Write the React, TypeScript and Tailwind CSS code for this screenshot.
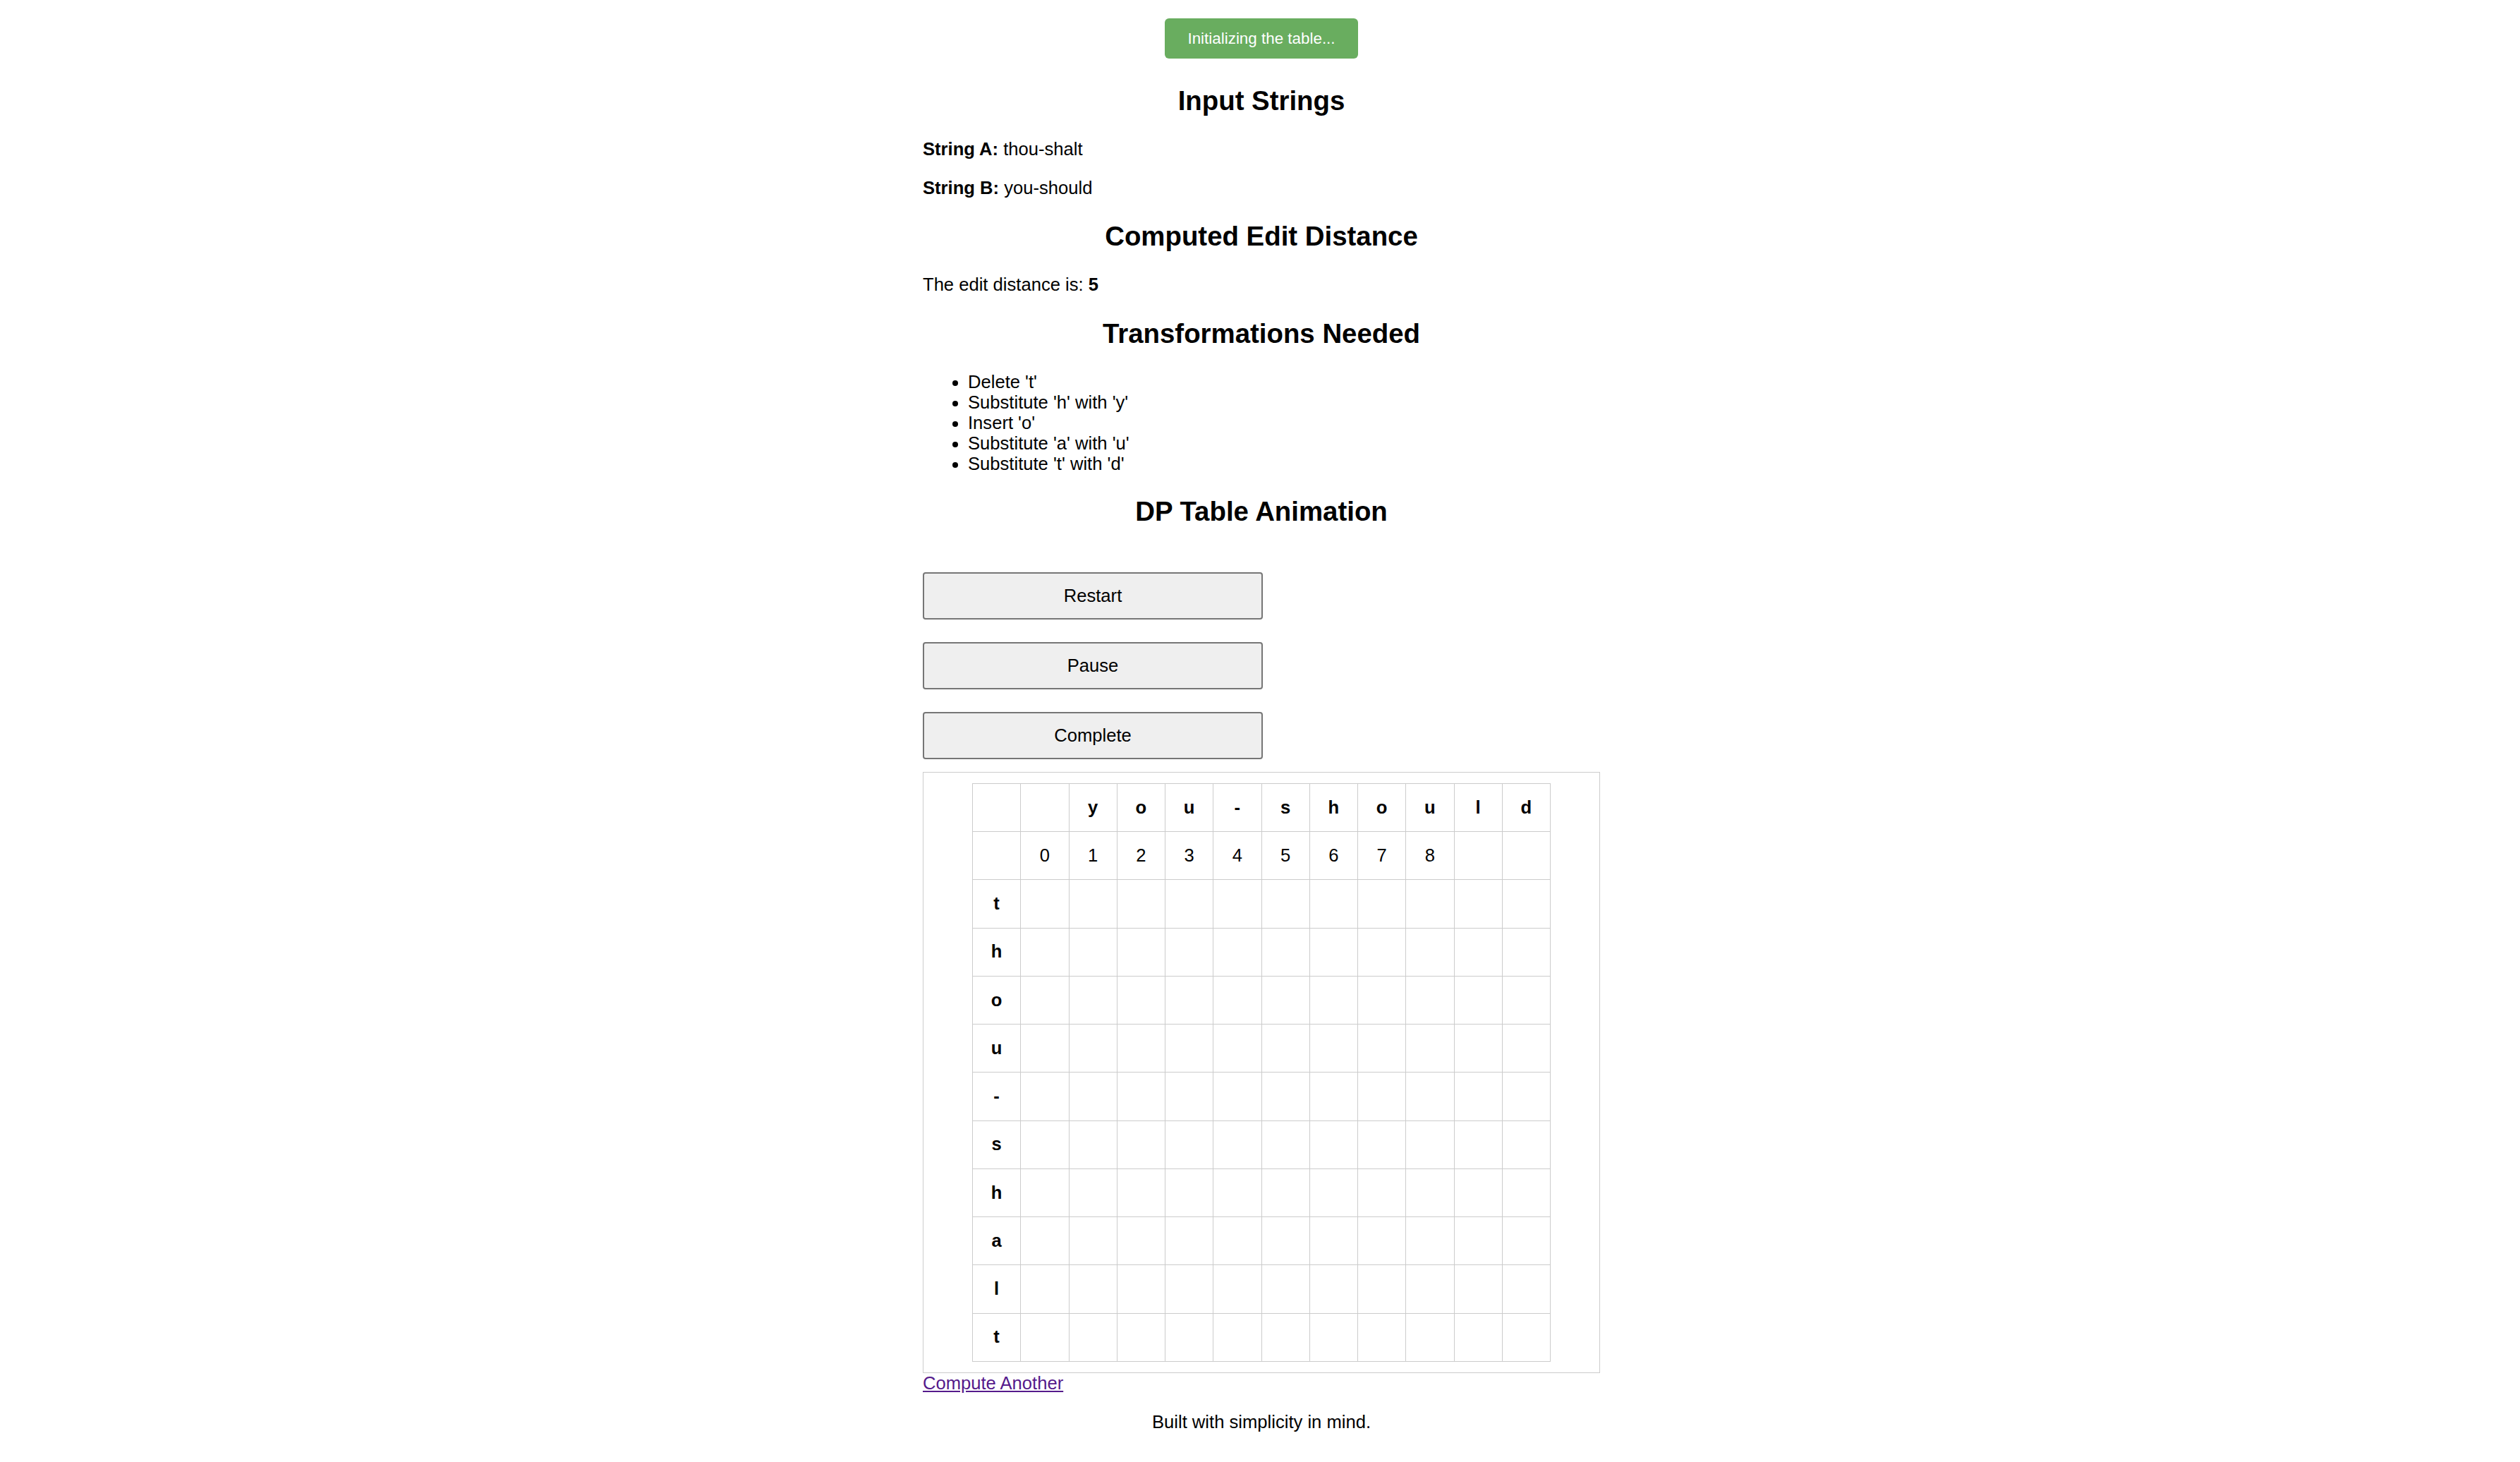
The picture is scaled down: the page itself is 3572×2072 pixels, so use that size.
import React from "react";

const stringA = "thou-shalt";
const stringB = "you-should";

const transformations = [
  "Delete 't'",
  "Substitute 'h' with 'y'",
  "Insert 'o'",
  "Substitute 'a' with 'u'",
  "Substitute 't' with 'd'",
];

// the animation has only filled the first row so far
const firstRow = ["", "0", "1", "2", "3", "4", "5", "6", "7", "8", "", ""];

const Cell = ({ children, bold }: { children?: React.ReactNode; bold?: boolean }) => (
  <td
    className={`h-[68.25px] border border-[#cccccc] p-0 text-center align-middle ${
      bold ? "font-bold" : ""
    }`}
  >
    {children}
  </td>
);

const DPTable = () => {
  const cols = stringB.split("");
  const rows = stringA.split("");
  return (
    <table className="mx-auto w-[820px] table-fixed border-collapse">
      <tbody>
        <tr>
          <Cell />
          <Cell />
          {cols.map((c, i) => (
            <Cell key={i} bold>
              {c}
            </Cell>
          ))}
        </tr>
        <tr>
          {firstRow.map((v, i) => (
            <Cell key={i}>{v}</Cell>
          ))}
        </tr>
        {rows.map((r, i) => (
          <tr key={i}>
            <Cell bold>{r}</Cell>
            {Array.from({ length: 11 }).map((_, j) => (
              <Cell key={j} />
            ))}
          </tr>
        ))}
      </tbody>
    </table>
  );
};

export default function App() {
  return (
    <div className="min-h-screen bg-white pl-[4px] font-['Liberation_Sans',Arial,sans-serif] text-[25.6px] leading-[29.4px] text-black">
      <div className="mx-auto w-[960px] pb-[40px]">
        {/* status toast */}
        <div className="mx-auto mt-[26px] flex h-[57px] w-[274px] items-center justify-center rounded-[6px] bg-[#69ad5f] text-[22.4px] text-white">
          Initializing the table...
        </div>

        <h2 className="mt-[38px] mb-[32px] text-center text-[38.4px] leading-[44px] font-bold">
          Input Strings
        </h2>
        <p className="my-[25.6px]">
          <strong>String A:</strong> {stringA}
        </p>
        <p className="my-[25.6px]">
          <strong>String B:</strong> {stringB}
        </p>

        <h2 className="my-[32px] text-center text-[38.4px] leading-[44px] font-bold">
          Computed Edit Distance
        </h2>
        <p className="my-[25.6px]">
          The edit distance is: <strong>5</strong>
        </p>

        <h2 className="my-[32px] text-center text-[38.4px] leading-[44px] font-bold">
          Transformations Needed
        </h2>
        <ul className="my-[25.6px] list-disc pl-[64px] leading-[29px]">
          {transformations.map((t) => (
            <li key={t}>{t}</li>
          ))}
        </ul>

        <h2 className="mt-[31px] mb-[64px] text-center text-[38.4px] leading-[44px] font-bold">
          DP Table Animation
        </h2>

        <div className="flex flex-col gap-[32px]">
          {["Restart", "Pause", "Complete"].map((label) => (
            <button
              key={label}
              className="h-[67px] w-[482px] rounded-[4px] border-2 border-[#767676] bg-[#efefef] text-[25.6px] text-black"
            >
              {label}
            </button>
          ))}
        </div>

        <div className="mt-[18px] overflow-x-auto border border-[#cccccc] px-[15px] pt-[15px] pb-[15px]">
          <DPTable />
        </div>

        <a href="#" className="block w-fit text-[#551a8b] underline">
          Compute Another
        </a>

        <p className="mt-[25.6px] text-center">Built with simplicity in mind.</p>
      </div>
    </div>
  );
}
